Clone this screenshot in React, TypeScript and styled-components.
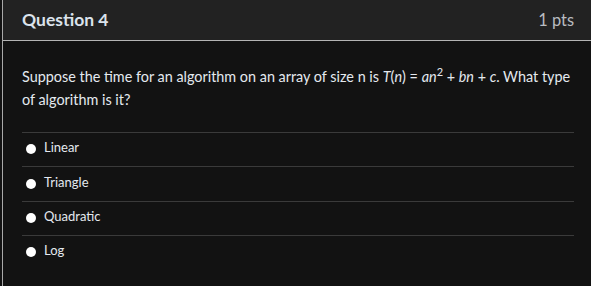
import React from 'react';
import styled, { createGlobalStyle } from 'styled-components';

const GlobalStyle = createGlobalStyle`
  html, body {
    margin: 0;
    padding: 0;
    background: #121212;
    font-family: Lato, "Noto Sans", sans-serif;
  }
`;

const StyledQuestion = styled.div`
  margin-left: 2px;
  border-left: 1px solid #a9a9a9;
  height: 286px;
  box-sizing: border-box;
`;

const StyledQuestionHeader = styled.div`
  height: 41px;
  background: #222222;
  border-bottom: 1px solid #b4b4b4;
  box-sizing: border-box;
  display: flex;
  align-items: center;
  justify-content: space-between;
  padding: 0 17px 2px 19px;
`;

const StyledQuestionTitle = styled.h2`
  margin: 0;
  font-size: 17.5px;
  font-weight: 700;
  color: #dbe3ec;
`;

const StyledQuestionPoints = styled.div`
  font-size: 16.4px;
  color: #b9bcc0;
`;

const StyledQuestionBody = styled.div`
  padding: 24px 17px 0 19px;
`;

const StyledQuestionText = styled.p`
  margin: 0 -10px 21px 0;
  font-size: 14.4px;
  line-height: 23px;
  color: #e4e9ef;

  sup {
    line-height: 0;
    font-size: 11px;
  }
`;

const StyledAnswerList = styled.div`
  display: flex;
  flex-direction: column;
`;

const StyledAnswer = styled.label`
  display: flex;
  align-items: center;
  gap: 8px;
  height: 34.4px;
  box-sizing: border-box;
  padding: 0 0 5px 4px;
  border-top: 1px solid #3a3a3a;
  font-size: 13px;
  color: #e4e9ef;
`;

const StyledRadio = styled.span`
  width: 10px;
  height: 10px;
  border-radius: 50%;
  background: #ffffff;
  margin-top: 4px;
`;

const answers = ['Linear', 'Triangle', 'Quadratic', 'Log'];

const App = () => {
  return (
    <>
      <GlobalStyle />
      <StyledQuestion>
        <StyledQuestionHeader>
          <StyledQuestionTitle>Question 4</StyledQuestionTitle>
          <StyledQuestionPoints>1 pts</StyledQuestionPoints>
        </StyledQuestionHeader>
        <StyledQuestionBody>
          <StyledQuestionText>
            Suppose the time for an algorithm on an array of size n is <i>T</i>(<i>n</i>) = <i>an</i>
            <sup>2</sup> + <i>bn</i> + <i>c</i>. What type of algorithm is it?
          </StyledQuestionText>
          <StyledAnswerList>
            {answers.map((a) => (
              <StyledAnswer key={a}>
                <StyledRadio />
                {a}
              </StyledAnswer>
            ))}
          </StyledAnswerList>
        </StyledQuestionBody>
      </StyledQuestion>
    </>
  );
};

export default App;
